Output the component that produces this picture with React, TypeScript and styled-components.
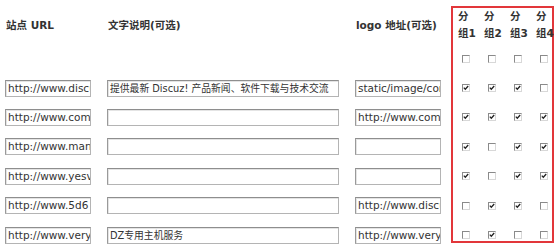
import React from "react";
import styled, { createGlobalStyle } from "styled-components";

const Global = createGlobalStyle`
  html, body { margin: 0; padding: 0; background: #fff; }
  body { font-family: "DejaVu Sans", "Noto Sans CJK SC", sans-serif; color: #333; }
`;

const ROW = 29.4;

const Page = styled.div`
  display: flex;
  align-items: flex-start;
  padding-left: 5px;
  width: 554px;
  height: 245px;
  box-sizing: border-box;
  overflow: hidden;
`;

const LinkTable = styled.div`
  display: grid;
  grid-template-columns: 102px 248px 96px;
  grid-template-rows: 44px repeat(7, ${ROW}px);
  align-items: center;
`;

const HeadCell = styled.div`
  font-size: 10.5px;
  font-weight: bold;
  color: #333;
  padding-left: 1px;
  padding-top: 4px;
  white-space: nowrap;
`;

const Cell = styled.div`
  display: flex;
  align-items: center;
  height: 100%;
`;

const TextInput = styled.div<{ $w: number; $fs?: number }>`
  width: ${(p) => p.$w}px;
  height: 17px;
  box-sizing: border-box;
  border: 1px solid #b4b4b4;
  border-top-color: #8e8e8e;
  border-left-color: #9a9a9a;
  box-shadow: inset 1px 1px 0 #e4e4e4;
  background: #fff;
  font-size: ${(p) => p.$fs ?? 10.5}px;
  line-height: 15px;
  color: #333;
  padding-left: 2px;
  white-space: nowrap;
  overflow: hidden;
`;

const GroupBox = styled.div`
  margin-top: 6px;
  width: 103px;
  height: 237px;
  box-sizing: border-box;
  border: 2px solid #e2363a;
  display: grid;
  grid-template-columns: repeat(4, 16px);
  column-gap: 10px;
  grid-template-rows: 36px repeat(7, ${ROW}px);
  padding-left: 5px;
  align-items: center;
`;

const GroupHead = styled.div`
  font-size: 10.5px;
  font-weight: bold;
  line-height: 17px;
  color: #333;
  white-space: nowrap;
  align-self: start;
`;

const CheckCell = styled.div`
  display: flex;
  align-items: center;
  padding-left: 4px;
`;

const Box = styled.span`
  display: block;
  width: 8px;
  height: 8px;
  box-sizing: border-box;
  border: 1px solid #d8d8d8;
  border-top-color: #8a8a8a;
  border-left-color: #8a8a8a;
  background: #fff;
  position: relative;
`;

const Check = ({ on }: { on: boolean }) => (
  <CheckCell>
    <Box>
      {on && (
        <svg width="6" height="6" viewBox="0 0 6 6" style={{ position: "absolute", left: 0, top: 0 }}>
          <path d="M0.8 2.6 L2.3 4.2 L5.2 1" stroke="#222" strokeWidth="1.3" fill="none" />
        </svg>
      )}
    </Box>
  </CheckCell>
);

const rows = [
  { url: "http://www.discu", desc: "提供最新 Discuz! 产品新闻、软件下载与技术交流", logo: "static/image/com", g: [1, 1, 1, 0] },
  { url: "http://www.com", desc: "", logo: "http://www.com", g: [1, 1, 1, 1] },
  { url: "http://www.man", desc: "", logo: "", g: [1, 0, 1, 1] },
  { url: "http://www.yesv", desc: "", logo: "", g: [1, 0, 1, 1] },
  { url: "http://www.5d6", desc: "", logo: "http://www.discu", g: [0, 1, 1, 0] },
  { url: "http://www.very", desc: "DZ专用主机服务", logo: "http://www.very", g: [0, 1, 0, 0] },
];

export default function App() {
  return (
    <>
      <Global />
      <Page>
        <LinkTable>
          <HeadCell>站点 URL</HeadCell>
          <HeadCell>文字说明(可选)</HeadCell>
          <HeadCell>logo 地址(可选)</HeadCell>
          <Cell />
          <Cell />
          <Cell />
          {rows.map((r, i) => (
            <React.Fragment key={i}>
              <Cell>
                <TextInput $w={86}>{r.url}</TextInput>
              </Cell>
              <Cell>
                <TextInput $w={232} $fs={9.8}>{r.desc}</TextInput>
              </Cell>
              <Cell>
                <TextInput $w={86}>{r.logo}</TextInput>
              </Cell>
            </React.Fragment>
          ))}
        </LinkTable>
        <GroupBox>
          {[1, 2, 3, 4].map((n) => (
            <GroupHead key={n}>
              分
              <br />组{n}
            </GroupHead>
          ))}
          {[0, 0, 0, 0].map((v, i) => (
            <Check key={"h" + i} on={!!v} />
          ))}
          {rows.map((r, i) =>
            r.g.map((v, j) => <Check key={i + "-" + j} on={!!v} />)
          )}
        </GroupBox>
      </Page>
    </>
  );
}
